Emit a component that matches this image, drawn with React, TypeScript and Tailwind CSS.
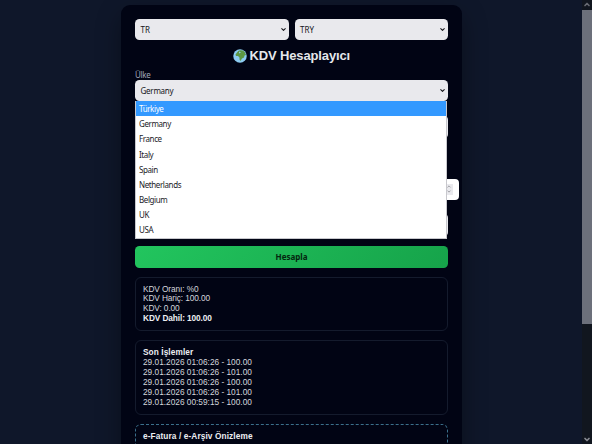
import { ChevronDown, ChevronUp } from "lucide-react";
import clsx from "clsx";

const countries = ["Türkiye", "Germany", "France", "Italy", "Spain", "Netherlands", "Belgium", "UK", "USA"];

const history = [
    "29.01.2026 01:06:26 - 100.00",
    "29.01.2026 01:06:26 - 101.00",
    "29.01.2026 01:06:26 - 100.00",
    "29.01.2026 01:06:26 - 101.00",
    "29.01.2026 00:59:15 - 100.00",
];

interface SelectBoxProps {
    value: string;
    className?: string;
}

function SelectBox({ value, className }: SelectBoxProps) {
    return (
        <div
            className={clsx(
                "flex h-[21.5px] items-center justify-between rounded-[4.5px] bg-[#e9e9ed] pl-[5.5px] pr-[2px] pt-px font-['Noto_Sans',sans-serif] text-[8px] text-[#15151a]",
                className
            )}
        >
            <span>{value}</span>
            <ChevronDown className="h-[7px] w-[7px]" strokeWidth={3.5} />
        </div>
    );
}

function Globe() {
    return (
        <svg viewBox="0 0 28 28" className="h-[14px] w-[14px]">
            <circle cx="14" cy="14" r="13.5" fill="#8ccbf0" />
            <path
                d="M8 7 Q10 3 14 2.5 L20 3 L24 7 L26 12 L23 13 L22 17 L18 19 L15 24 L13 21 L13 17 L10 14 L6 14 L5 11 Z"
                fill="#5d9741"
            />
            <path d="M12 5 L16 7 L12 9 Z" fill="#8ccbf0" />
        </svg>
    );
}

function CountryMenu() {
    return (
        <ul className="absolute left-0 top-[21px] z-10 h-[138px] w-[312px] border-x border-b border-[#c8c8cd] bg-white font-['Noto_Sans',sans-serif] text-[8px] tracking-[-0.4px] text-[#1b1b1f]">
            {countries.map((country, index) => (
                <li
                    key={country}
                    className={clsx(
                        "flex h-[15.2px] items-center pl-[3px] pt-[1.8px]",
                        index === 0 && "bg-[#3399ff] text-white"
                    )}
                >
                    {country}
                </li>
            ))}
        </ul>
    );
}

function Scrollbar() {
    return (
        <div className="flex w-[10px] flex-col items-center justify-between bg-[#11161f]">
            <ChevronUp className="h-[9px] w-[8px] shrink-0 text-[#686b73]" strokeWidth={5} />
            <div className="mt-px h-[314px] w-full shrink-0 bg-[#6c707b]" />
            <div className="grow" />
            <ChevronDown className="h-[9px] w-[8px] shrink-0 text-[#8a8d94]" strokeWidth={5} />
        </div>
    );
}

export default function App() {
    return (
        <div className="flex h-[444px] w-[592px] overflow-hidden bg-[#0f172a] font-['Liberation_Sans',Arial,sans-serif]">
            <main className="flex grow justify-center pt-[4.5px]">
                <div className="h-[520px] w-[341px] rounded-[9px] bg-[#010414] pl-[14.5px] pr-[13.5px] pt-[14px] shadow-[0_10px_25px_rgba(0,0,0,0.35)]">
                    <div className="flex gap-[6px]">
                        <SelectBox value="TR" className="flex-1" />
                        <SelectBox value="TRY" className="flex-1" />
                    </div>

                    <h1 className="mt-[7px] flex h-[17px] items-center justify-center gap-[2.5px] text-[13px] font-bold tracking-[-0.13px] text-[#e5e7eb]">
                        <Globe />
                        <span>KDV Hesaplayıcı</span>
                    </h1>

                    <div className="mt-[1.5px] h-[180.5px]">
                        <label className="block h-[14px] pt-[3px] font-['Noto_Sans',sans-serif] text-[8px] leading-[11px] tracking-[-0.3px] text-[#a3a7b8]">
                            Ülke
                        </label>
                        <div className="relative">
                            <SelectBox value="Germany" className="tracking-[-0.25px]" />
                            <CountryMenu />
                        </div>
                        <div className="mt-[15px] h-[21.5px] rounded-[4px] bg-[#e9e9ed]" />
                        <div className="mt-[41px] flex h-[21.5px] w-[324px] items-center justify-end rounded-[4px] bg-white pr-[6px]">
                            <div className="flex h-[11px] w-[8px] flex-col items-center justify-center bg-[#e9e9ed] text-[#77777d]">
                                <ChevronUp className="h-[5px] w-[6px]" strokeWidth={3} />
                                <ChevronDown className="h-[5px] w-[6px]" strokeWidth={3} />
                            </div>
                        </div>
                        <div className="mt-[14px] h-[21.5px] rounded-[4px] bg-[#e9e9ed]" />
                    </div>

                    <button className="block h-[21.5px] w-full rounded-[4.5px] bg-linear-135 from-[#22c55e] to-[#16a34a] font-['Noto_Sans',sans-serif] text-[8px] font-bold text-[#04260f]">
                        Hesapla
                    </button>

                    <section className="mt-[9px] h-[54.5px] rounded-[6px] border border-[#141b2d] px-[7px] pt-[7px] text-[8.3px] leading-[9.9px] tracking-[-0.1px] text-[#d4d6dc]">
                        <p>KDV Oranı: %0</p>
                        <p>KDV Hariç: 100.00</p>
                        <p>KDV: 0.00</p>
                        <p className="font-bold text-[#eceef2]">KDV Dahil: 100.00</p>
                    </section>

                    <section className="mt-[9px] h-[74.5px] rounded-[6px] border border-[#141b2d] px-[7px] pt-[7px] text-[8.3px] leading-[9.9px] text-[#d4d6dc]">
                        <h2 className="font-bold tracking-[0.08px] text-[#eceef2]">Son İşlemler</h2>
                        {history.map((entry, index) => (
                            <p key={index}>{entry}</p>
                        ))}
                    </section>

                    <section className="mt-[9px] h-[80px] rounded-[6px] border border-dashed border-[#3b708c] px-[7px] pt-[7px] text-[8.3px] leading-[9.9px]">
                        <h2 className="font-bold tracking-[0.1px] text-[#eceef2]">e-Fatura / e-Arşiv Önizleme</h2>
                    </section>
                </div>
            </main>
            <Scrollbar />
        </div>
    );
}
